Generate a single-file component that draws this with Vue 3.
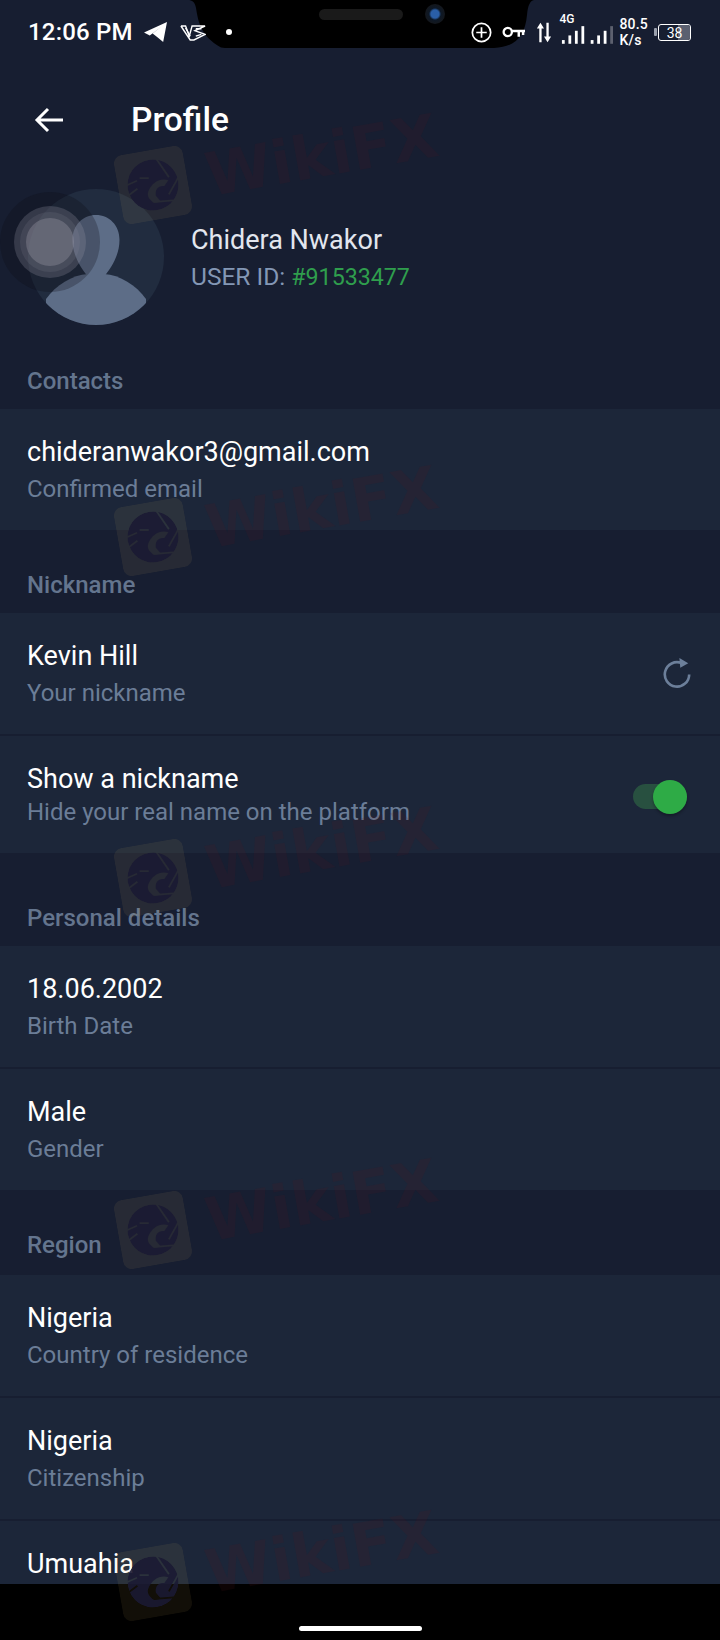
<script setup>
const sections = [
  { label: 'Contacts', cls: 'first', rows: [{ title: 'chideranwakor3@gmail.com', sub: 'Confirmed email' }] },
  { label: 'Nickname', cls: 'nick', rows: [
    { title: 'Kevin Hill', sub: 'Your nickname', action: 'refresh' },
    { title: 'Show a nickname', sub: 'Hide your real name on the platform', action: 'toggle', tight: true }
  ] },
  { label: 'Personal details', cls: 'personal', rows: [
    { title: '18.06.2002', sub: 'Birth Date' },
    { title: 'Male', sub: 'Gender' }
  ] },
  { label: 'Region', cls: 'region', rows: [
    { title: 'Nigeria', sub: 'Country of residence' },
    { title: 'Nigeria', sub: 'Citizenship' },
    { title: 'Umuahia', sub: '' }
  ] }
]
const marks = [149.5, 502, 843, 1195, 1546.5]
</script>

<template>
  <div class="page">
    <header class="status">
      <div class="status-left">
        <span class="time">12:06 PM</span>
        <svg class="i-tg" viewBox="0 0 26 24"><path d="M1 12 25 1 21 22 15 17 10 13 19 6 7 15Z" fill="#fff"/></svg>
        <svg class="i-vs" viewBox="0 0 28 18" fill="none" stroke="#fff" stroke-width="1.500"><path d="M1 2h5l4 11 3-11h14L16 7l11 4-12 6h-4L1 2"/><path d="M6 4l5 9M17 5h6M17 13l6-2"/></svg>
        <span class="dot"></span>
      </div>
      <svg class="notch" viewBox="0 0 346 48"><path d="M0 0C4 0 7 2 8 8 10 20 12 36 33 47.500 36 48 38 48 40 48H306C328 47 337 36 339 15 340 5 342 1 346 0Z" fill="#000"/></svg>
      <span class="speaker"></span>
      <span class="camera"></span>
      <div class="status-right">
        <svg class="i-plus" viewBox="0 0 22 22" fill="none" stroke="#fff" stroke-width="1.800"><circle cx="11" cy="11" r="9.600"/><path d="M11 5.500v11M5.500 11h11"/></svg>
        <svg class="i-key" viewBox="0 0 24 14" fill="none" stroke="#fff"><circle cx="6" cy="7" r="4.300" stroke-width="2.400"/><path d="M10 6h14M17.500 6v6M22 6v4" stroke-width="2.600"/></svg>
        <svg class="i-arrows" viewBox="0 0 18 22" fill="#fff"><path d="M5 0 9 6.500H6.300V22H3.700V6.500H1ZM11.700 0h2.600v15.500H17l-4 6.500-4-6.500h2.700Z"/></svg>
        <div class="signal">
          <span class="four-g">4G</span>
          <svg viewBox="0 0 56 20" fill="#fff"><rect x="1" y="16" width="3" height="4"/><rect x="8" y="11" width="3" height="9"/><rect x="15" y="6" width="3" height="14"/><rect x="22" y="1" width="3" height="19"/><rect x="32" y="16" width="3" height="4"/><rect x="39" y="11" width="3" height="9"/><rect x="46" y="6" width="3" height="14"/><rect x="53" y="1" width="3" height="19" opacity=".3"/></svg>
        </div>
        <div class="speed"><span>80.5</span><span>K/s</span></div>
        <div class="battery"><span class="nub"></span><div class="cell"><span class="fill"></span><span class="pct">38</span></div></div>
      </div>
    </header>

    <div class="topbar">
      <svg class="back" viewBox="0 0 30 26" fill="none" stroke="#fff" stroke-width="3"><path d="M29 13H3M14 2 3 13l11 11"/></svg>
      <h1>Profile</h1>
    </div>

    <div class="identity">
      <div class="avatar">
        <svg viewBox="0 0 136 136">
          <circle cx="68" cy="68" r="68" fill="#212c3f"/>
          <clipPath id="av"><circle cx="68" cy="68" r="68"/></clipPath>
          <g clip-path="url(#av)" fill="#5d6d87">
            <path d="M68 26c13 0 23.500 10 23.500 25 0 16-9 28-14 35h-19c-5-7-14-19-14-35 0-15 10.500-25 23.500-25Z"/>
            <path d="M18 136 V110 C28 96 44 86 60 85 H76 C92 86 108 96 118 110 V136Z"/>
          </g>
        </svg>
      </div>
      <div class="who">
        <div class="name">Chidera Nwakor</div>
        <div class="uid">USER ID: <span>#91533477</span></div>
      </div>
    </div>

    <main class="list">
      <section v-for="s in sections" :key="s.label" :class="s.cls">
        <h2>{{ s.label }}</h2>
        <div v-for="(r, i) in s.rows" :key="i" class="row" :class="{ tight: r.tight }">
          <div class="texts">
            <div class="title">{{ r.title }}</div>
            <div v-if="r.sub" class="sub">{{ r.sub }}</div>
          </div>
          <svg v-if="r.action === 'refresh'" class="refresh" viewBox="0 0 32 32" fill="none">
            <path d="M29 17.500A13 13 0 1 1 21 5.500" stroke="#6c7f9a" stroke-width="2.800"/>
            <path d="M18.500 0 28 5.500 19.500 10.500Z" fill="#6c7f9a"/>
          </svg>
          <div v-if="r.action === 'toggle'" class="toggle"><span class="knob"></span></div>
        </div>
      </section>
    </main>

    <footer class="nav"><span class="pill"></span></footer>

    <div class="touch"><span class="t1"></span><span class="t2"></span><span class="t4"></span><span class="t3"></span></div>

    <div v-for="y in marks" :key="y" class="mark" :style="{ top: y + 'px' }">
      <svg class="logo" viewBox="0 0 70 70">
        <mask :id="'eagle' + y" maskUnits="userSpaceOnUse" x="0" y="0" width="70" height="70">
          <circle cx="35" cy="35" r="25.500" fill="#fff"/>
          <path d="M29 41C34 32 44 29 51 33L46 38C40 36 36 40 36 46L40 53 33 53C29 49 27 45 29 41Z" fill="#000"/>
          <path d="M42 8 52 30M62 31 49 47M56 54 34 52M23 26 32 27.500M8 31 20 28M9 41 19 36" stroke="#000" stroke-width="1.800" fill="none"/>
        </mask>
        <rect width="70" height="70" rx="9" class="logo-bg"/>
        <circle cx="35" cy="35" r="25.500" class="logo-eye" :mask="'url(#eagle' + y + ')'"/>
      </svg>
      <span class="wm">WikiFX</span>
    </div>
  </div>
</template>

<style>
html, body { margin: 0; background: #171e31; }
</style>

<style scoped>
.page {
  position: relative;
  width: 720px;
  height: 1640px;
  overflow: hidden;
  display: flex;
  flex-direction: column;
  background: #171e31;
  font-family: Roboto, "Liberation Sans", sans-serif;
  color: #fff;
}
.status {
  position: relative;
  height: 62px;
  flex: none;
  display: flex;
  justify-content: space-between;
  align-items: flex-start;
  padding: 18px 29px 0 28px;
  box-sizing: border-box;
}
.status-left { display: flex; align-items: center; height: 28px; position: relative; z-index: 1; }
.time { font-size: 24px; font-weight: 500; letter-spacing: .2px; line-height: 28px; white-space: nowrap; }
.i-tg { width: 25px; height: 23px; margin-left: 10px; }
.i-vs { width: 26px; height: 17px; margin-left: 12px; }
.dot { width: 6px; height: 6px; border-radius: 50%; background: #fff; margin-left: 20px; }
.notch { position: absolute; left: 188px; top: 0; width: 346px; height: 48px; }
.speaker { position: absolute; left: 319px; top: 9px; width: 84px; height: 11px; border-radius: 6px; background: #1a1a1a; }
.camera { position: absolute; left: 425px; top: 4px; width: 20px; height: 20px; border-radius: 50%; background: radial-gradient(circle, #2a5fa8 0 4px, #0d1826 6px, #14171c 10px); }
.status-right { display: flex; align-items: center; height: 28px; position: relative; z-index: 1; }
.i-plus { width: 21px; height: 21px; }
.i-key { width: 23px; height: 14px; margin-left: 10px; }
.i-arrows { width: 16px; height: 21px; margin-left: 11px; }
.signal { position: relative; width: 52px; height: 20px; margin-left: 9px; margin-top: 3px; }
.signal svg { display: block; width: 52px; height: 19px; margin-top: 1px; }
.four-g { position: absolute; left: -2px; top: -11px; font-size: 12px; font-weight: 500; line-height: 12px; }
.speed { display: flex; flex-direction: column; margin-left: 6px; font-size: 14px; font-weight: 500; line-height: 16px; letter-spacing: .2px; }
.battery { display: flex; align-items: center; margin-left: 6px; }
.nub { width: 3px; height: 8px; background: #9aa0ad; border-radius: 1px; margin-right: 1px; }
.cell { position: relative; width: 31px; height: 15px; border: 1.500px solid #fff; border-radius: 3px; overflow: hidden; }
.fill { position: absolute; right: 0; top: 0; bottom: 0; width: 12px; background: #5b6070; }
.pct { position: absolute; inset: 0; text-align: center; font-size: 14px; line-height: 16px; }
.topbar { flex: none; display: flex; align-items: center; padding: 0 0 0 34px; box-sizing: border-box; height: 116px; }
.back { width: 30px; height: 26px; }
h1 { margin: 0 0 0 67px; font-size: 33.500px; font-weight: 500; line-height: 40px; }
.identity { flex: none; display: flex; align-items: center; padding: 11px 0 0 28px; }
.avatar { width: 136px; height: 136px; }
.avatar svg { display: block; width: 136px; height: 136px; }
.who { margin-left: 27px; margin-top: 2px; }
.name { font-size: 27px; line-height: 38px; color: #e2e6ee; }
.uid { font-size: 24.500px; line-height: 36px; color: #8397b5; }
.uid span { color: #2f9e4d; font-size: 23.200px; }
.list { flex: 1; min-height: 0; overflow: hidden; }
h2 { margin: 0; font-size: 24px; font-weight: 500; line-height: 30px; color: #64758e; padding: 0 0 13px 27px; }
.first h2 { padding-top: 41px; }
.nick h2 { padding-top: 40px; }
.personal h2 { padding-top: 50px; }
.region h2 { padding-top: 40px; padding-bottom: 15px; }
.row { display: flex; align-items: center; justify-content: space-between; background: #1c2639; padding: 25px 28px 23px 27px; margin-bottom: 2px; height: 121px; box-sizing: border-box; }
.row:last-child { margin-bottom: 0; }
.row.tight { height: 117px; padding-top: 25px; padding-bottom: 18px; }
.texts { align-self: flex-start; }
.title { font-size: 27px; line-height: 36px; color: #fff; }
.sub { font-size: 24px; line-height: 37px; margin-top: 1px; color: #6b7d97; white-space: nowrap; }
.tight .sub { line-height: 31px; margin-top: 0; }
.refresh { width: 30px; height: 30px; margin-bottom: 4px; }
.toggle { position: relative; width: 54px; height: 25px; border-radius: 13px; background: #285040; margin: 0 5px 4px 0; }
.knob { position: absolute; right: 0; top: -4px; width: 34px; height: 34px; border-radius: 50%; background: #2eab46; box-shadow: 0 2px 3px rgba(0,0,0,.3); }
.nav { flex: none; height: 56px; background: #000; display: flex; justify-content: center; align-items: flex-start; padding-top: 42px; box-sizing: border-box; }
.pill { width: 123px; height: 5px; border-radius: 3px; background: #fff; }
.touch { position: absolute; left: 0; top: 192px; width: 100px; height: 100px; pointer-events: none; }
.touch span { position: absolute; border-radius: 50%; }
.t1 { inset: 0; background: rgba(10, 12, 18, .26); }
.t2 { inset: 14px; background: rgba(150, 150, 165, .26); }
.t4 { inset: 20px; background: rgba(150, 150, 165, .14); }
.t3 { inset: 26px; background: rgba(170, 165, 180, .3); }
.mark { position: absolute; left: 117.500px; width: 340px; height: 70px; pointer-events: none; display: flex; align-items: center; transform-origin: 35px 35px; transform: rotate(-10deg); }
.logo { width: 70px; height: 70px; flex: none; }
.logo-bg { fill: rgba(230, 190, 100, .08); }
.logo-eye { fill: #1b1a33; opacity: .9; }
.wm { margin-left: 19px; font-family: "DejaVu Sans", sans-serif; font-size: 60px; font-weight: 700; line-height: 70px; letter-spacing: 0; color: rgba(90, 20, 30, .14); }
</style>
